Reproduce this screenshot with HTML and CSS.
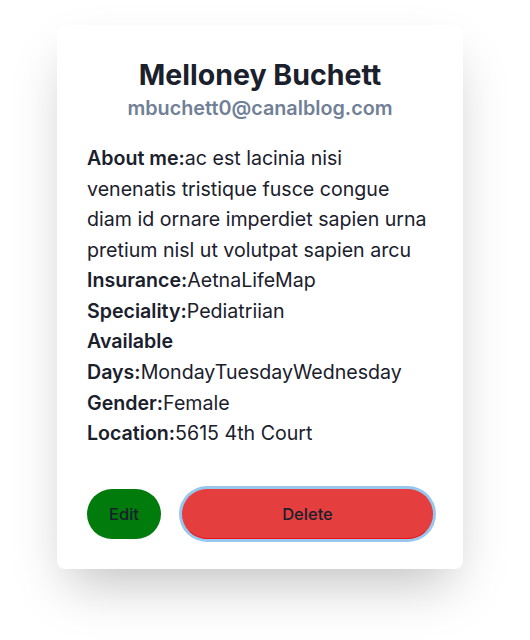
FILE: index.html
```html
<!DOCTYPE html>
<html>
<head>
<meta charset="utf-8">
<link rel="stylesheet" href="styles.css">
</head>
<body>
<div class="page">
  <div class="card">
    <div class="head">
      <h1 class="name">Melloney Buchett</h1>
      <p class="email">mbuchett0@canalblog.com</p>
    </div>
    <div class="info">
      <p><span class="label">About me:</span>ac est lacinia nisi venenatis tristique fusce congue diam id ornare imperdiet sapien urna pretium nisl ut volutpat sapien arcu</p>
      <p><span class="label">Insurance:</span>AetnaLifeMap</p>
      <p><span class="label">Speciality:</span>Pediatriian</p>
      <p><span class="label">Available Days:</span>MondayTuesdayWednesday</p>
      <p><span class="label">Gender:</span>Female</p>
      <p><span class="label">Location:</span>5615 4th Court</p>
    </div>
    <div class="actions">
      <button class="btn edit">Edit</button>
      <button class="btn delete">Delete</button>
    </div>
  </div>
</div>
</body>
</html>
```
FILE: styles.css
```css
html, body {
  margin: 0;
  padding: 0;
  background: #ffffff;
}
.page {
  padding: 25px 0 90px 57px;
}
.card {
  width: 406px;
  box-sizing: border-box;
  padding: 32px 30px 30px 30px;
  background: #ffffff;
  border-radius: 8px;
  box-shadow: 0 25px 50px -12px rgba(0, 0, 0, 0.25);
  font-family: Inter, "Liberation Sans", sans-serif;
  color: #1a202c;
}
.head {
  text-align: center;
}
.name {
  margin: 0;
  font-size: 28.5px;
  line-height: 36px;
  font-weight: 700;
  color: #1a202c;
}
.email {
  margin: 0;
  font-size: 19.8px;
  line-height: 30px;
  font-weight: 600;
  color: #718096;
}
.info {
  margin-top: 20px;
  font-size: 19.6px;
  line-height: 30.56px;
}
.info p {
  margin: 0;
}
.label {
  font-weight: 600;
}
.actions {
  display: flex;
  align-items: center;
  gap: 21px;
  margin-top: 40px;
}
.btn {
  font-family: Inter, "Liberation Sans", sans-serif;
  font-size: 16.5px;
  font-weight: 500;
  color: #1a202c;
  border-radius: 9999px;
  height: 50px;
  padding: 0;
  cursor: pointer;
}
.edit {
  width: 74px;
  background: #007b0c;
  border: none;
}
.delete {
  flex: 1;
  background: #e53e3e;
  border: 1px solid #e53e3e;
  border-bottom-color: #f01010;
  box-shadow: 0 0 0 3px rgba(66, 153, 225, 0.55);
}
```
